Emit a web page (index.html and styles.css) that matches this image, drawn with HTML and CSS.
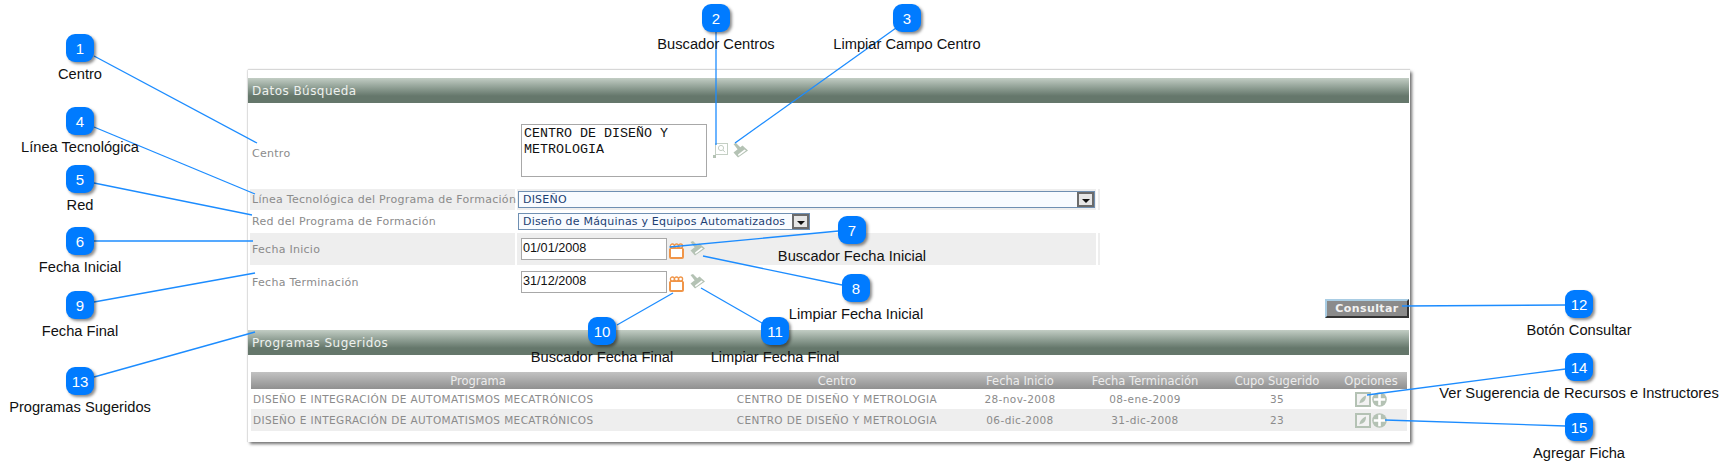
FILE: index.html
```html
<!DOCTYPE html>
<html lang="es">
<head>
<meta charset="utf-8">
<title>Datos Búsqueda</title>
<link rel="stylesheet" href="styles.css">
</head>
<body>
<svg width="0" height="0" class="defs">
  <symbol id="brush" viewBox="0 0 15 15">
    <path d="M0.5 1 3 0 8 5 5.5 7.5Z" fill="#b4c2b4"/>
    <path d="M0.5 9.5 9.5 2.5 15 7.5 5 14.5Z" fill="#b4c2b4"/>
    <path d="M5 11.6 11.5 6.4 13 7.6 5.6 13Z" fill="#fff"/>
  </symbol>
  <symbol id="cal" viewBox="0 0 15 16">
    <path d="M1 5.5V14a1 1 0 0 0 1 1H13a1 1 0 0 0 1-1V5.5" fill="#fff" stroke="#f09548" stroke-width="2"/>
    <rect x="1" y="4" width="13" height="2" fill="#f09548"/>
    <circle cx="3.4" cy="3" r="2" fill="#fff" stroke="#f09548" stroke-width="1.3"/>
    <circle cx="7.5" cy="3" r="2" fill="#fff" stroke="#f09548" stroke-width="1.3"/>
    <circle cx="11.6" cy="3" r="2" fill="#fff" stroke="#f09548" stroke-width="1.3"/>
  </symbol>
  <symbol id="pencil" viewBox="0 0 16 15">
    <rect x="1" y="1" width="14" height="13" fill="#f2f2f2" stroke="#b4c2b4" stroke-width="2"/>
    <path d="M4.4 11.6C4.6 8.4 7 5 10.8 3.4 11.6 7 9 10.4 6 10.8Z" fill="#b4c2b4"/>
  </symbol>
  <symbol id="plus" viewBox="0 0 15 15">
    <circle cx="7.5" cy="7.5" r="7.3" fill="#b4c2b4"/>
    <path d="M7.5 1.8V13.2M1.8 7.5H13.2" stroke="#fff" stroke-width="2.6"/>
  </symbol>
</svg>

<div class="canvas">
  <section class="panel">
    <h2 class="bar">Datos Búsqueda</h2>
    <div class="form">
      <div class="lbl lbl-tall">Centro</div>
      <div class="val val-tall">
        <div class="area">CENTRO DE DISEÑO Y METROLOGIA</div>
        <svg class="ico-search" viewBox="0 0 16 15" width="16" height="15">
          <rect x="2.5" y="0.5" width="12" height="11" fill="#fff" stroke="#c4cfc4"/>
          <circle cx="8" cy="5" r="2.6" fill="none" stroke="#c4cfc4"/>
          <path d="M10 7 12 9.2" stroke="#c4cfc4"/>
          <rect x="0" y="12" width="3" height="3" fill="#b4c2b4"/>
        </svg>
        <svg class="ico-brush-a" width="15" height="15"><use href="#brush"/></svg>
      </div>
      <div class="end"></div>

      <div class="lbl shade">Línea Tecnológica del Programa de Formación</div>
      <div class="val shade">
        <div class="sel sel-wide"><span class="sel-text">DISEÑO</span><span class="sel-btn"></span></div>
      </div>
      <div class="end shade"></div>

      <div class="lbl">Red del Programa de Formación</div>
      <div class="val">
        <div class="sel sel-narrow"><span class="sel-text">Diseño de Máquinas y Equipos Automatizados</span><span class="sel-btn"></span></div>
      </div>
      <div class="end"></div>

      <div class="lbl shade">Fecha Inicio</div>
      <div class="val shade date">
        <div class="inp">01/01/2008</div>
        <svg class="ico-cal" width="15" height="16"><use href="#cal"/></svg>
        <svg class="ico-brush-b" width="15" height="15"><use href="#brush"/></svg>
      </div>
      <div class="end shade"></div>

      <div class="lbl">Fecha Terminación</div>
      <div class="val date">
        <div class="inp">31/12/2008</div>
        <svg class="ico-cal" width="15" height="16"><use href="#cal"/></svg>
        <svg class="ico-brush-b" width="15" height="15"><use href="#brush"/></svg>
      </div>
      <div class="end"></div>
    </div>

    <div class="actions"><button class="btn" type="button">Consultar</button></div>

    <h2 class="bar bar-second">Programas Sugeridos</h2>
    <table class="grid">
      <colgroup>
        <col class="c-prog"><col class="c-cen"><col class="c-ini"><col class="c-ter"><col class="c-cup"><col class="c-opt">
      </colgroup>
      <thead>
        <tr><th>Programa</th><th>Centro</th><th>Fecha Inicio</th><th>Fecha Terminación</th><th>Cupo Sugerido</th><th>Opciones</th></tr>
      </thead>
      <tbody>
        <tr class="r1">
          <td class="left">DISEÑO E INTEGRACIÓN DE AUTOMATISMOS MECATRÓNICOS</td>
          <td>CENTRO DE DISEÑO Y METROLOGIA</td><td>28-nov-2008</td><td>08-ene-2009</td><td>35</td>
          <td><div class="opts"><svg width="16" height="15"><use href="#pencil"/></svg><svg width="15" height="15"><use href="#plus"/></svg></div></td>
        </tr>
        <tr class="r2">
          <td class="left">DISEÑO E INTEGRACIÓN DE AUTOMATISMOS MECATRÓNICOS</td>
          <td>CENTRO DE DISEÑO Y METROLOGIA</td><td>06-dic-2008</td><td>31-dic-2008</td><td>23</td>
          <td><div class="opts"><svg width="16" height="15"><use href="#pencil"/></svg><svg width="15" height="15"><use href="#plus"/></svg></div></td>
        </tr>
      </tbody>
    </table>
  </section>

  <svg class="lines" width="1730" height="464" viewBox="0 0 1730 464">
    <path d="M94 56 257 143"/>
    <path d="M716 30V145"/>
    <path d="M896 28 735 143"/>
    <path d="M94 127 255 194"/>
    <path d="M94 183 252 215"/>
    <path d="M94 241H253"/>
    <path d="M94 302 255 273"/>
    <path d="M94 377 255 332"/>
    <path d="M838.5 231 669.5 247"/>
    <path d="M842 285 703 256"/>
    <path d="M617 325 673 293"/>
    <path d="M762 323 701 288"/>
    <path d="M1565.5 305 1402 306"/>
    <path d="M1565.5 369 1367 395"/>
    <path d="M1565.5 426 1385 420"/>
  </svg>

  <div class="call n1"><span class="badge">1</span><span class="cap">Centro</span></div>
  <div class="call n2"><span class="badge">2</span><span class="cap">Buscador Centros</span></div>
  <div class="call n3"><span class="badge">3</span><span class="cap">Limpiar Campo Centro</span></div>
  <div class="call n4"><span class="badge">4</span><span class="cap">Línea Tecnológica</span></div>
  <div class="call n5"><span class="badge">5</span><span class="cap">Red</span></div>
  <div class="call n6"><span class="badge">6</span><span class="cap">Fecha Inicial</span></div>
  <div class="call n7"><span class="badge">7</span><span class="cap">Buscador Fecha Inicial</span></div>
  <div class="call n8"><span class="badge">8</span><span class="cap">Limpiar Fecha Inicial</span></div>
  <div class="call n9"><span class="badge">9</span><span class="cap">Fecha Final</span></div>
  <div class="call n10"><span class="badge">10</span><span class="cap">Buscador Fecha Final</span></div>
  <div class="call n11"><span class="badge">11</span><span class="cap">Limpiar Fecha Final</span></div>
  <div class="call n12"><span class="badge">12</span><span class="cap">Botón Consultar</span></div>
  <div class="call n13"><span class="badge">13</span><span class="cap">Programas Sugeridos</span></div>
  <div class="call n14"><span class="badge">14</span><span class="cap">Ver Sugerencia de Recursos e Instructores</span></div>
  <div class="call n15"><span class="badge">15</span><span class="cap">Agregar Ficha</span></div>
</div>
</body>
</html>
```
FILE: styles.css
```css
* { box-sizing: border-box; }
html, body { margin: 0; padding: 0; background: #fff; }
.defs { position: absolute; }

.canvas {
  position: relative;
  width: 1730px;
  height: 464px;
  padding: 70px 0 0 248px;
  overflow: hidden;
  font-family: "DejaVu Sans", sans-serif;
}

/* panel */
.panel {
  width: 1162px;
  height: 372px;
  padding-top: 8px;
  background: #fff;
  box-shadow: 2px 2px 3px #6f6f6f, 0 -1px 1px #ddd, -1px 0 1px #e6e6e6;
}
.bar {
  margin: 0 1px 0 0;
  height: 25px;
  padding: 5px 4px 0;
  font-size: 12px;
  line-height: 16px;
  font-weight: normal;
  color: #eef1ee;
  letter-spacing: 0.45px;
  background: linear-gradient(#c2cdc4 0, #8d9d92 40%, #65776b 72%, #65776b 100%);
}
.bar-second { margin-top: 12px; }

/* form */
.form {
  display: grid;
  grid-template-columns: 265px 579px 2px;
  grid-template-rows: 84px 21px 19px 32px 30px;
  gap: 2px;
  padding-left: 2px;
}
.lbl {
  display: flex;
  align-items: center;
  padding-left: 2px;
  font-size: 11px;
  letter-spacing: 0.28px;
  color: #8b8b8b;
  white-space: nowrap;
}
.lbl-tall { padding-top: 16px; }
.val { display: flex; align-items: center; }
.shade { background: #eee; }
.val-tall { align-items: flex-start; padding: 21px 0 0 4px; }
.area {
  width: 186px;
  height: 53px;
  padding: 1px 2px;
  border: 1px solid #a8a8a8;
  background: #fff;
  font: 13.33px/16px "Liberation Mono", monospace;
  color: #111;
}
.ico-search { margin: 19px 0 0 6px; }
.ico-brush-a { margin: 19px 0 0 4px; }

.sel {
  display: flex;
  align-items: center;
  height: 17px;
  margin-left: 1px;
  border: 1px solid #6f8fb2;
  background: #f8fbff;
  font-size: 11px;
  letter-spacing: 0.2px;
  color: #1d3f73;
  white-space: nowrap;
}
.sel-wide { width: 577px; }
.sel-narrow { width: 292px; }
.sel-text { flex: 1; padding: 0 6px 0 4px; }
.sel-btn {
  position: relative;
  width: 17px;
  height: 15px;
  border: 2px solid #6b6b6b;
  background: #e6e6e6;
}
.sel-btn::after {
  content: "";
  position: absolute;
  left: 3px;
  top: 5px;
  border: 4px solid transparent;
  border-bottom: 0;
  border-top-color: #111;
}
.date { padding-left: 4px; align-items: flex-start; }
.shade.date { padding-top: 5px; }
.date:not(.shade) { padding-top: 4px; }
.inp {
  width: 146px;
  height: 22px;
  padding: 0 1px;
  border: 1px solid #a8a8a8;
  background: #fff;
  font: 12.67px/18px "Liberation Sans", sans-serif;
  color: #111;
}
.ico-cal { margin: 5px 0 0 2px; }
.ico-brush-b { margin: 3px 0 0 6px; }

/* action */
.actions { display: flex; justify-content: flex-end; margin: 2px 1px 0 0; }
.btn {
  width: 84px;
  height: 19px;
  padding: 0;
  border: 2px solid;
  border-color: #a9cde4 #333 #333 #a9cde4;
  background: #8b8b8b;
  color: #f2f2f2;
  font: bold 11px/14px "DejaVu Sans", sans-serif;
  letter-spacing: 0.4px;
}

/* table */
.grid {
  width: 1156px;
  margin: 17px 0 0 3px;
  border-collapse: collapse;
  table-layout: fixed;
  font-size: 10.5px;
  color: #8b8b8b;
}
.c-prog { width: 454px; }
.c-cen { width: 264px; }
.c-ini { width: 102px; }
.c-ter { width: 148px; }
.c-cup { width: 116px; }
.c-opt { width: 72px; }
.grid th {
  height: 17px;
  padding: 0;
  font-size: 11.5px;
  font-weight: normal;
  color: #ececec;
  background: linear-gradient(#c2c2c2, #909090);
}
.grid td { padding: 0; text-align: center; letter-spacing: 0.4px; white-space: nowrap; }
.grid td.left { text-align: left; padding-left: 2px; }
.r1 { height: 20px; }
.r2 { height: 22px; background: #eee; }
.opts { display: flex; justify-content: center; gap: 1px; height: 15px; }

/* callouts */
.lines { position: absolute; left: 0; top: 0; fill: none; stroke: #1c8cff; stroke-width: 1.3; pointer-events: none; }
.call {
  position: absolute;
  width: 320px;
  display: flex;
  flex-direction: column;
  align-items: center;
  font-family: "Liberation Sans", sans-serif;
}
.badge {
  display: flex;
  align-items: center;
  justify-content: center;
  width: 28px;
  height: 28px;
  border-radius: 9px;
  background: #007bff;
  box-shadow: 2px 2px 3px rgba(0, 0, 0, 0.45);
  color: #fff;
  font-size: 15px;
}
.cap {
  margin-top: 4px;
  font-size: 14.67px;
  line-height: 16px;
  color: #111;
  white-space: nowrap;
}
.n1 { left: -80px; top: 34px; }
.n2 { left: 556px; top: 4px; }
.n3 { left: 747px; top: 4px; }
.n4 { left: -80px; top: 107px; }
.n5 { left: -80px; top: 165px; }
.n6 { left: -80px; top: 227px; }
.n7 { left: 692px; top: 216px; }
.n8 { left: 696px; top: 274px; }
.n9 { left: -80px; top: 291px; }
.n10 { left: 442px; top: 317px; }
.n11 { left: 615px; top: 317px; }
.n12 { left: 1419px; top: 290px; }
.n13 { left: -80px; top: 367px; }
.n14 { left: 1419px; top: 353px; }
.n15 { left: 1419px; top: 413px; }
```
